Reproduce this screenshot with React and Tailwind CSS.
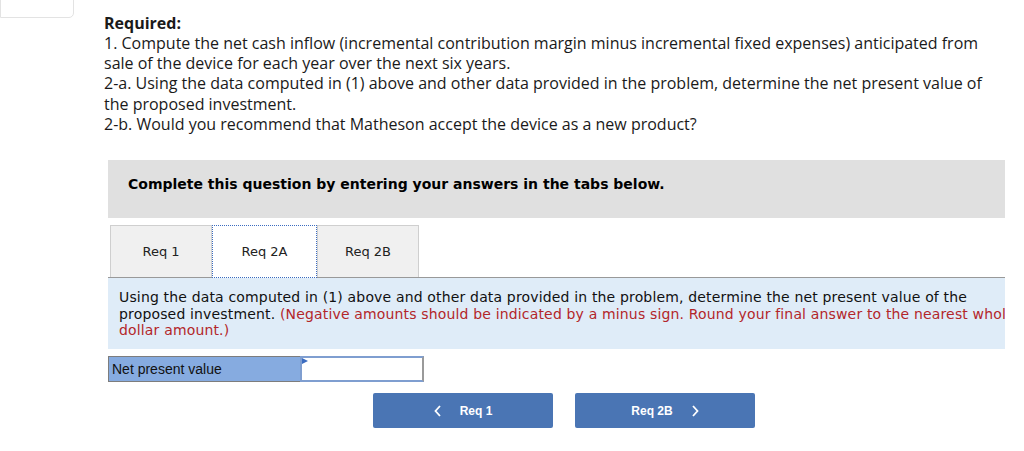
const TABS = ['Req 1', 'Req 2A', 'Req 2B']

export default function App() {
  return (
    <div className="relative h-[451px] w-[1024px] overflow-hidden bg-white">
      {/* References tab, cut at top */}
      <div className="absolute left-0 top-[-10px] h-[28px] w-[74px] rounded-br-[5px] border border-[#e3e3e3] bg-white" />

      <div className="pl-[104px] pt-[13px] text-[16px] leading-[20.2px] text-[#1a1a1a]" style={{ fontFamily: '"Open Sans", sans-serif' }}>
        <div className="font-bold text-[16px] leading-[20px]">Required:</div>
        <div className="whitespace-nowrap">1. Compute the net cash inflow (incremental contribution margin minus incremental fixed expenses) anticipated from</div>
        <div className="whitespace-nowrap">sale of the device for each year over the next six years.</div>
        <div className="whitespace-nowrap">2-a. Using the data computed in (1) above and other data provided in the problem, determine the net present value of</div>
        <div className="whitespace-nowrap">the proposed investment.</div>
        <div className="whitespace-nowrap">2-b. Would you recommend that Matheson accept the device as a new product?</div>
      </div>

      <div className="ml-[108px] mt-[26px] w-[897px]" style={{ fontFamily: '"DejaVu Sans", Verdana, sans-serif' }}>
        <div className="flex h-[58px] items-center bg-[#e0e0e0] pl-[20px] pb-[9px] text-[14px] font-bold text-black">
          Complete this question by entering your answers in the tabs below.
        </div>

        <div className="mt-[7px] flex border-b border-[#999] pl-[2px]">
          {TABS.map((t) => (
            <div
              key={t}
              className={
                t === 'Req 2A'
                  ? 'mb-[-1px] flex h-[53px] w-[105px] items-center justify-center border border-dotted border-[#3b6cc0] bg-white text-[13px] text-[#222]'
                  : 'flex h-[52px] w-[102px] items-center justify-center border border-b-0 border-[#cfcfcf] bg-[#f0f0f0] text-[13px] text-[#222]'
              }
            >
              {t}
            </div>
          ))}
        </div>

        <div className="h-[71px] overflow-hidden bg-[#dfecf8] pl-[11px] pt-[11px] text-[14px] leading-[16.5px] tracking-[0.16px] text-[#111]">
          <div className="whitespace-nowrap">Using the data computed in (1) above and other data provided in the problem, determine the net present value of the</div>
          <div className="whitespace-nowrap">
            proposed investment. <span className="text-[#b3262a]">(Negative amounts should be indicated by a minus sign. Round your final answer to the nearest whole</span>
          </div>
          <div className="whitespace-nowrap text-[#b3262a]">dollar amount.)</div>
        </div>

        <div className="mt-[7px] flex h-[26px] w-[316px]" style={{ fontFamily: '"Liberation Sans", Arial, sans-serif' }}>
          <div className="flex w-[192px] items-center border border-r-0 border-[#7d7d7d] bg-[#86abe0] pl-[3px] text-[14px] text-[#111]">
            Net present value
          </div>
          <div className="relative flex-1 border-2 border-[#7f9ed0] border-r-[#9a9a9a] bg-white">
            <span className="absolute left-0 top-0 h-0 w-0 border-b-[3px] border-l-[6px] border-t-[3px] border-b-transparent border-l-[#3b6cc0] border-t-transparent" />
          </div>
        </div>

        <div className="mt-[11px] flex gap-[22px] pl-[265px]" style={{ fontFamily: '"Liberation Sans", Arial, sans-serif' }}>
          <button className="flex h-[35px] w-[180px] items-center justify-center gap-[18px] rounded-[2px] bg-[#4a75b4] text-[12px] font-bold text-white">
            <svg width="8" height="12" viewBox="0 0 8 12" fill="none" stroke="white" strokeWidth="1.8"><path d="M6 1L1.5 6L6 11" /></svg>
            <span>Req 1</span>
          </button>
          <button className="flex h-[35px] w-[180px] items-center justify-center gap-[18px] rounded-[2px] bg-[#4a75b4] text-[12px] font-bold text-white">
            <span>Req 2B</span>
            <svg width="8" height="12" viewBox="0 0 8 12" fill="none" stroke="white" strokeWidth="1.8"><path d="M2 1L6.5 6L2 11" /></svg>
          </button>
        </div>
      </div>
    </div>
  )
}
